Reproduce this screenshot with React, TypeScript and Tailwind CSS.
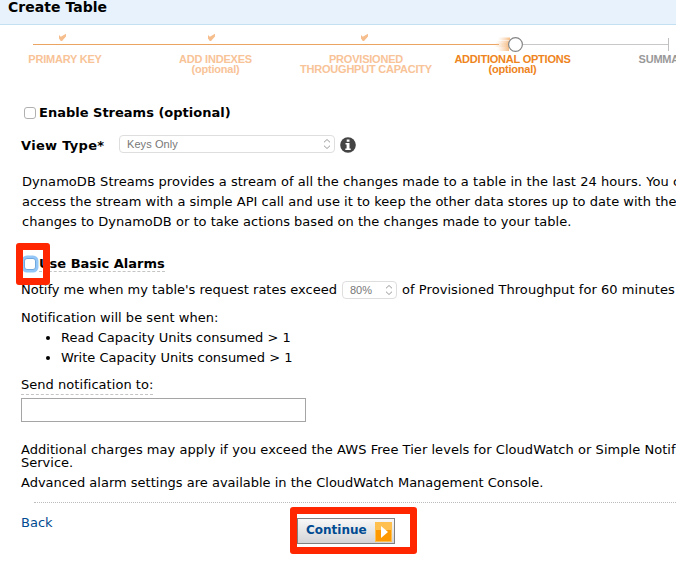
import React from "react";

const steps = [
  { lines: ["PRIMARY KEY"], box: "ml-[15px] w-[100px] text-[#f8c397]" },
  { lines: ["ADD INDEXES", "(optional)"], box: "ml-[50px] w-[101px] text-[#f8c397]" },
  { lines: ["PROVISIONED", "THROUGHPUT CAPACITY"], box: "ml-[25px] w-[150px] text-[#f8c397]" },
  { lines: ["ADDITIONAL OPTIONS", "(optional)"], box: "w-[143px] text-[#ee8420]" },
  { lines: ["SUMMARY"], box: "ml-[42px] w-[80px] text-[#999999]" },
];

function Track() {
  return (
    <svg className="block shrink-0" width="676" height="29" viewBox="0 25 676 29" fill="none">
      <defs>
        <linearGradient id="trail" x1="0" x2="1" y1="0" y2="0">
          <stop offset="0" stopColor="#f8cda3" stopOpacity="0" />
          <stop offset="1" stopColor="#f5b577" stopOpacity="0.9" />
        </linearGradient>
      </defs>
      <rect x="33" y="44" width="466" height="1" fill="#eba462" />
      <rect x="520" y="44" width="149" height="1" fill="#c8c8c8" />
      <rect x="668" y="38" width="1" height="13" fill="#c0c0c0" />
      {[62, 211, 364].map((x) => (
        <path
          key={x}
          d={`M${x - 3} 35 L${x - 1.2} 36.8 L${x + 4} 33.8 V36.6 L${x} 41 H${x - 1.2} L${x - 3} 38.6z`}
          fill="#f6be8c"
        />
      ))}
      <rect x="498" y="37.5" width="12" height="3" fill="url(#trail)" />
      <rect x="496" y="41" width="14" height="2" fill="url(#trail)" />
      <rect x="494" y="43" width="15" height="4" fill="url(#trail)" />
      <rect x="497" y="47" width="12" height="4" fill="url(#trail)" />
      <circle cx="515.5" cy="44.5" r="6.9" fill="#fff" stroke="#858585" strokeWidth="1.2" />
    </svg>
  );
}

function Chevrons() {
  return (
    <svg width="8" height="12" viewBox="0 0 8 12" fill="none" stroke="#9a9a9a" strokeWidth="1">
      <path d="M1 4.3 L4 1.5 L7 4.3 M1 7.7 L4 10.5 L7 7.7" />
    </svg>
  );
}

export default function App() {
  return (
    <div className="h-[566px] w-[676px] overflow-hidden bg-white font-['DejaVu_Sans',sans-serif] text-[13px] whitespace-nowrap text-black">
      <header className="h-[25px] border-b border-[#c3dff2] bg-[#e8f2fc] pl-2">
        <h1 className="text-[14px] leading-[14px] font-bold tracking-[0.03px]">Create Table</h1>
      </header>
      <Track />
      <div className="flex h-[43px] items-start text-center font-['Liberation_Sans',sans-serif] text-[11px] leading-[10px] font-bold tracking-[-0.22px]">
        {steps.map((s) => (
          <div key={s.lines[0]} className={"shrink-0 " + s.box}>
            {s.lines.map((l) => (
              <div key={l}>{l}</div>
            ))}
          </div>
        ))}
      </div>
      <main className="pl-[21px]">
        <label className="flex h-8 items-center pl-[3px]">
          <span className="mr-[3px] size-3 rounded-[3px] border border-[#b0b0b0] bg-white" />
          <span className="font-bold">Enable Streams (optional)</span>
        </label>
        <div className="mt-px flex h-7 items-center">
          <span className="w-[98px] pt-1 font-bold tracking-[0.3px]">View Type*</span>
          <div className="flex h-[18px] w-[216px] items-center justify-between rounded-[4px] border border-[#dedede] pr-[3px] pl-[7px] font-['Liberation_Sans',sans-serif] text-[11px] tracking-[0.08px] text-[#777]">
            <span>Keys Only</span>
            <Chevrons />
          </div>
          <svg className="mt-[2px] ml-[5px]" width="16" height="16" viewBox="0 0 16 16">
            <circle cx="8" cy="8" r="7.8" fill="#444" />
            <path d="M6.7 2.5h2.8v2.3H6.7zM5.5 6h4v5.4h1.2v1.6H5.3v-1.6h1.3V7.6H5.5z" fill="#fff" />
          </svg>
        </div>
        <div className="mt-[14px] pl-px leading-5">
          <p className="tracking-[0.055px]">DynamoDB Streams provides a stream of all the changes made to a table in the last 24 hours. You can</p>
          <p className="tracking-[0.025px]">access the stream with a simple API call and use it to keep the other data stores up to date with the</p>
          <p className="tracking-[0.02px]">changes to DynamoDB or to take actions based on the changes made to your table.</p>
        </div>
        <label className="relative mt-[24px] flex h-4 items-center pl-[3px]">
          <span className="mr-[3px] size-3 rounded-[3px] border border-[#6fa8dc] bg-white shadow-[0_0_0_2.5px_#93c7f8]" />
          <span className="h-4 border-b border-dashed border-[#c4c4c4] leading-4 font-bold">Use Basic Alarms</span>
          <span className="absolute top-[-13px] left-[-5px] h-[42px] w-[34px] rounded-[3px] border-7 border-[#ff2600]" />
        </label>
        <div className="mt-[8px] flex h-5 items-center">
          <span className="w-[321px]">Notify me when my table's request rates exceed</span>
          <div className="flex h-[18px] w-[55px] items-center justify-between rounded-[4px] border border-[#dedede] pr-[3px] pl-[7px] font-['Liberation_Sans',sans-serif] text-[11px] text-[#777]">
            <span>80%</span>
            <Chevrons />
          </div>
          <span className="ml-[5px] tracking-[0.06px]">of Provisioned Throughput for 60 minutes</span>
        </div>
        <p className="mt-[8px] leading-5 tracking-[0.03px]">Notification will be sent when:</p>
        <ul className="leading-5">
          {["Read Capacity Units consumed > 1", "Write Capacity Units consumed > 1"].map((t) => (
            <li key={t} className="flex items-center pl-[25px]">
              <span className="mr-[11px] size-1 rounded-full bg-black" />
              {t}
            </li>
          ))}
        </ul>
        <p className="mt-[9px] h-[18px] w-fit border-b border-dashed border-[#c4c4c4] leading-4 tracking-[0.04px]">Send notification to:</p>
        <input className="mt-[3px] block h-6 w-[285px] border border-[#a5a5a5] bg-white" />
        <p className="mt-[21px] leading-[13px]">
          <span className="tracking-[0.045px]">
            Additional charges may apply if you exceed the AWS Free Tier levels for CloudWatch or Simple Notification
          </span>
          <br />
          Service.
        </p>
        <p className="mt-[7px] leading-[13px]">Advanced alarm settings are available in the CloudWatch Management Console.</p>
        <div className="mt-[13px] ml-[13px] border-t border-dotted border-[#bcbcbc]" />
        <div className="mt-[4px] flex items-start">
          <a className="w-[269px] pt-[8px] leading-4 text-[#004b91]">Back</a>
          <div className="h-[47px] w-[127px] rounded-[3px] border-7 border-[#ff2600] pt-[4px]">
            <button className="flex h-[26px] w-[98px] items-center border border-[#808080] bg-linear-to-b from-[#f8f8f8] to-[#d4d4d6] pl-[8px] text-[12px] font-bold text-[#004b91]">
              <span className="-mt-[2px] w-[69px] text-left leading-6">Continue</span>
              <svg className="mt-px shrink-0" width="17" height="20" viewBox="0 0 17 20">
                <rect width="17" height="20" fill="#ffc04f" />
                <rect x="1" y="8" width="15" height="11" fill="#ff9900" />
                <path d="M6 4 L13 10 L6 16z" fill="#fff" />
              </svg>
            </button>
          </div>
        </div>
      </main>
    </div>
  );
}
